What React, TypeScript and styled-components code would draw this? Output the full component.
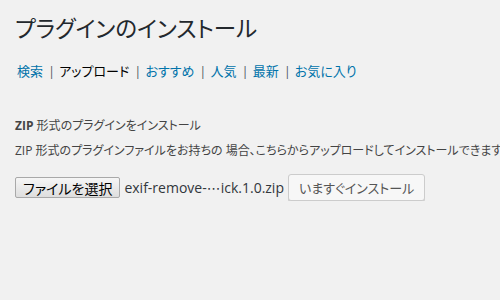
import React from 'react';
import styled, { createGlobalStyle } from 'styled-components';

const GlobalStyle = createGlobalStyle`
  html, body {
    margin: 0;
    padding: 0;
    background: #f1f1f1;
    overflow: hidden;
  }
  body {
    font-family: "Open Sans", "Noto Sans CJK JP", sans-serif;
    font-feature-settings: "palt";
    color: #444;
  }
`;

const tabs = ['検索', 'アップロード', 'おすすめ', '人気', '最新', 'お気に入り'];
const current = 1;

const App = () => {
  return (
    <>
      <GlobalStyle />
      <Page>
        <Title>プラグインのインストール</Title>
        <Nav>
          {tabs.map((tab, i) => (
            <React.Fragment key={tab}>
              {i > 0 && <Sep>|</Sep>}
              <Tab active={i === current}>{tab}</Tab>
            </React.Fragment>
          ))}
        </Nav>
        <Heading>
          <b>ZIP</b> 形式のプラグインをインストール
        </Heading>
        <Desc>ZIP 形式のプラグインファイルをお持ちの 場合、こちらからアップロードしてインストールできます。</Desc>
        <Form>
          <FileButton>ファイルを選択</FileButton>
          <FileName>
            exif-remove-<Dots>⋯</Dots>ick.1.0.zip
          </FileName>
          <InstallButton>いますぐインストール</InstallButton>
        </Form>
      </Page>
    </>
  );
};

const Page = styled.div`
  padding: 14px 0 0 15px;
  width: 700px;
`;

const Title = styled.h1`
  margin: 0;
  font-size: 22.5px;
  font-weight: 400;
  line-height: 30px;
  color: #23282d;
`;

const Nav = styled.div`
  display: flex;
  align-items: center;
  margin-top: 17px;
  padding-left: 2px;
  font-size: 13px;
  line-height: 20px;
`;

const Tab = styled.span<{ active?: boolean }>`
  color: ${(props) => (props.active ? '#000' : '#0073aa')};
`;

const Sep = styled.span`
  color: #555d66;
  margin: 0 4px 0 5px;
`;

const Heading = styled.p`
  margin: 35px 0 0;
  font-size: 12px;
  line-height: 20px;
  white-space: nowrap;

  b {
    font-weight: 700;
  }
`;

const Desc = styled.p`
  margin: 5px 0 0;
  font-size: 12px;
  line-height: 20px;
  white-space: nowrap;
`;

const Form = styled.div`
  display: flex;
  align-items: center;
  margin-top: 13px;
`;

const FileButton = styled.div`
  height: 21px;
  box-sizing: border-box;
  padding: 0 7px;
  display: flex;
  align-items: center;
  font-size: 14px;
  color: #000;
  background: linear-gradient(#f6f6f6, #dedede);
  border: 1px solid #a9a9a9;
  border-radius: 2px;
`;

const FileName = styled.span`
  margin-left: 4px;
  font-size: 14px;
  color: #32373c;
`;

const Dots = styled.span`
  font-family: "DejaVu Sans", sans-serif;
  font-feature-settings: normal;
`;

const InstallButton = styled.div`
  margin-left: 4px;
  height: 27px;
  box-sizing: border-box;
  padding: 0 10px;
  display: flex;
  align-items: center;
  font-size: 13px;
  color: #555;
  background: #f7f7f7;
  border: 1px solid #ccc;
  border-radius: 3px;
  box-shadow: 0 1px 0 #ccc;
`;

export default App;
